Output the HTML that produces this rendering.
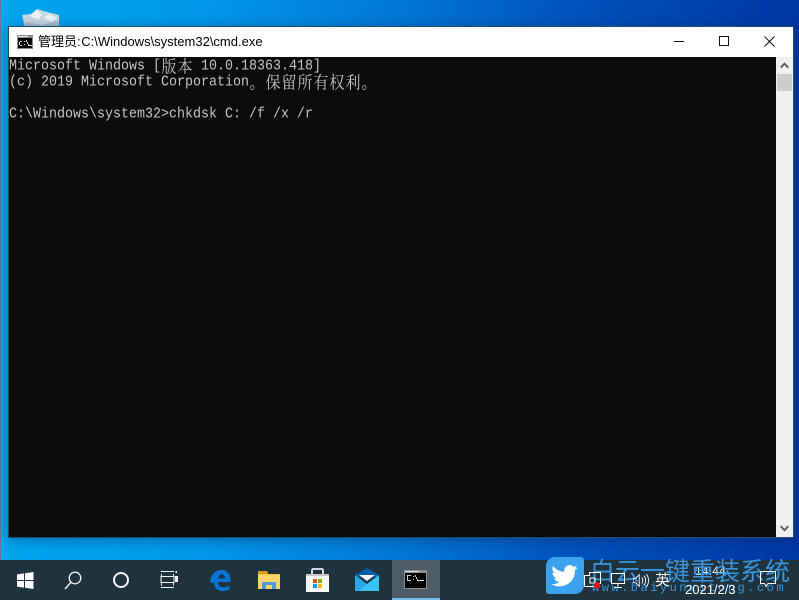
<!DOCTYPE html>
<html><head><meta charset="utf-8">
<style>
html,body{margin:0;padding:0;width:799px;height:600px;overflow:hidden;background:#0070d0}
*{box-sizing:border-box}
.a{position:absolute}
#bg{left:0;top:0;width:799px;height:600px;background:linear-gradient(90deg,#00a6ee 0%,#0098ea 25%,#0078d6 50%,#0052bc 72%,#0036a4 100%)}
#win{left:8px;top:26px;width:786px;height:512px;border:1px solid #1a4f6e;box-shadow:0 2px 12px rgba(0,40,90,.45);background:#fff}
#con{left:9px;top:57px;width:767px;height:480px;background:#0c0c0c}
.l{position:absolute;left:9px;font:13.33px/16px "Liberation Mono","Noto Serif CJK SC",monospace;color:#c4c4c4;white-space:pre;height:16px;transform:scaleY(1.14)}
.c{display:inline-block;width:16px;font:15px/16px "Noto Serif CJK SC",serif;text-align:center;vertical-align:top}
#title{left:38px;top:34px;font:13px/16px "Liberation Sans","Noto Sans CJK SC",sans-serif;color:#000;white-space:pre;word-spacing:-3px}
#tb{left:0;top:560px;width:799px;height:40px;background:#1f333f}
</style></head><body>
<div class="a" id="bg"></div>
<div class="a" style="left:0;top:0;width:1px;height:560px;background:#6a7a88"></div>
<svg class="a" style="left:21px;top:9px" width="40" height="19" viewBox="0 0 40 19"><path d="M1 6 L10 5 L16 0 L26 3 L38 6 L38 19 L4 19Z" fill="#c9d8e2"/><path d="M9 7l7-6 5 5-4 5zM22 8l7-3 7 4-6 4z" fill="#eef3f6"/><path d="M4 13l16 3 18-4v7H5z" fill="#a9bfcf"/></svg>

<div class="a" id="win"></div>
<svg class="a" style="left:17px;top:35px" width="16" height="14" viewBox="0 0 16 14"><rect width="16" height="14" fill="#8c8c8c"/><rect x="1" y="3" width="14" height="10" fill="#000"/><rect x="1" y="1" width="10" height="1" fill="#e8e8e8"/><path d="M3 6h2v1H3v3h2v1H3V10H2V7h1zM7 6h1v1H7zM7 9h1v1H7zM9 5h1v2h1v2h1v2h-1V9h-1V7H9z" fill="#ddd"/><rect x="12" y="10" width="3" height="1" fill="#ddd"/></svg>
<div class="a" id="title">管理员: C:\Windows\system32\cmd.exe</div>
<div class="a" style="left:674px;top:41px;width:10px;height:1px;background:#111"></div>
<div class="a" style="left:719px;top:36px;width:10px;height:10px;border:1px solid #111"></div>
<svg class="a" style="left:764px;top:36px" width="11" height="11" viewBox="0 0 11 11"><path d="M.5.5l10 10M10.500.5l-10 10" stroke="#111" stroke-width="1" fill="none"/></svg>

<div class="a" id="con"></div>
<div class="a" style="left:776px;top:57px;width:17px;height:480px;background:#f0f0f0"></div>
<div class="a" style="left:777px;top:74px;width:15px;height:17px;background:#cdcdcd"></div>
<svg class="a" style="left:780px;top:62px" width="9" height="7" viewBox="0 0 9 7"><path d="M.7 5.700L4.500 1.700l3.800 4" stroke="#606060" stroke-width="2" fill="none"/></svg>
<svg class="a" style="left:780px;top:525px" width="9" height="7" viewBox="0 0 9 7"><path d="M.7 1.200l3.800 4 3.800-4" stroke="#606060" stroke-width="2" fill="none"/></svg>

<div class="l" style="top:59px">Microsoft Windows [<span class="c">版</span><span class="c">本</span> 10.0.18363.418]</div>
<div class="l" style="top:75px">(c) 2019 Microsoft Corporation<span class="c">。</span><span class="c">保</span><span class="c">留</span><span class="c">所</span><span class="c">有</span><span class="c">权</span><span class="c">利</span><span class="c">。</span></div>
<div class="l" style="top:107px">C:\Windows\system32&gt;chkdsk C: /f /x /r</div>

<div class="a" id="tb"></div>
<svg class="a" style="left:17px;top:572px" width="17" height="17" viewBox="0 0 17 17"><path d="M0 2.400L7 1.400V8H0zM8 1.300L16.500 0V8H8zM0 9H7V15.600L0 14.600zM8 9H16.500V17L8 15.800z" fill="#fff"/></svg>
<svg class="a" style="left:64px;top:571px" width="19" height="19" viewBox="0 0 19 19"><circle cx="11" cy="7" r="5.800" fill="none" stroke="#f2f4f5" stroke-width="1.300"/><path d="M7 11.200L1 18" stroke="#f2f4f5" stroke-width="1.400" fill="none"/></svg>
<div class="a" style="left:113px;top:572px;width:16px;height:16px;border:2.500px solid #f4f6f7;border-radius:50%"></div>
<svg class="a" style="left:160px;top:571px" width="18" height="17" viewBox="0 0 18 17"><path d="M1 .5h13M1 16.500h13M1.500 3v2M13.500 3v2M1 5.500h13v6H1zM1.500 12v2.500M13.500 12v2.500" stroke="#f2f4f5" fill="none"/><rect x="15.500" y="0" width="1.500" height="2" fill="#f2f4f5"/><rect x="15" y="5" width="3" height="6" fill="#f2f4f5"/></svg>
<svg class="a" style="left:210px;top:570px" width="21" height="21" viewBox="0 0 21 21"><path fill-rule="evenodd" d="M0 11C1 4 6 0 11.500 0 17.500 0 21 5 20.500 12H8C8 15.500 10.500 17.200 13.500 17.200 16 17.200 18 16.500 19.500 15.200V19.300C17.500 20.500 15 21 13 21 6.500 21 3.500 16.500 4.500 12.500 3 13.500 1 13.500 0 11ZM8.200 8.500H15C15 5.500 13.200 4.200 11.800 4.200 10.200 4.200 8.800 6 8.200 8.500Z" fill="#0a74d6"/></svg>
<svg class="a" style="left:258px;top:571px" width="22" height="18" viewBox="0 0 22 18"><path d="M0 0h9l1 2v2H0z" fill="#d99c12"/><rect y="3" width="22" height="15" fill="#fdd465"/><path d="M0 3h22v1H0z" fill="#f7c24b"/><path d="M4 18v-7h14v7h-4v-4H8v4z" fill="#4f9ad3"/></svg>
<svg class="a" style="left:306px;top:568px" width="23" height="24" viewBox="0 0 23 24"><path d="M6 7V2.500Q6 1 7.500 1h8Q17 1 17 2.500V7" fill="none" stroke="#ececec" stroke-width="1.800"/><rect y="6" width="23" height="18" fill="#f7f7f7"/><rect y="6" width="23" height="2" fill="#c8c8c8"/><rect x="7" y="11" width="4" height="4" fill="#ee4e22"/><rect x="12" y="11" width="4" height="4" fill="#77b900"/><rect x="7" y="16" width="4" height="4" fill="#0f9fe8"/><rect x="12" y="16" width="4" height="4" fill="#fdb900"/></svg>
<svg class="a" style="left:355px;top:568px" width="24" height="23" viewBox="0 0 24 23"><path d="M0 7L12 0l12 7v2H0z" fill="#0a5cab"/><path d="M4 7h16l-8 6z" fill="#f3f6fa"/><path d="M0 7l12 9L24 7v16H0z" fill="#2aa8ea"/><path d="M12 16L24 7v16H4z" fill="#38c3f5"/></svg>
<div class="a" style="left:392px;top:560px;width:48px;height:40px;background:#4d5c66"></div>
<div class="a" style="left:392px;top:598px;width:48px;height:2px;background:#76b9ed"></div>
<svg class="a" style="left:404px;top:570px" width="23" height="20" viewBox="0 0 23 20"><rect width="23" height="19" fill="#8e8e8e"/><rect x="1" y="3" width="21" height="15" fill="#000"/><rect x="1" y="1" width="14" height="1" fill="#ddd"/><path d="M3 5h4v1H4v4h3v1H3zM9 6h1v1H9zM9 9h1v1H9zM11 5h1v2h1v2h1v2h-1V9h-1V7h-1z" fill="#ccc"/><rect x="14" y="10" width="6" height="1" fill="#ddd"/></svg>

<div class="a" style="left:695px;top:563px;font:12px/16px 'Liberation Sans',sans-serif;color:#fff;letter-spacing:.2px">14:44</div>

<div class="a" style="left:546px;top:557px;width:38px;height:37px;background:#3ba3ee;border-radius:9px 3px 9px 3px"></div>
<svg class="a" style="left:551px;top:565px" width="27" height="22" viewBox="0 0 24 20"><path d="M24 2.400c-.9.400-1.800.700-2.800.800 1-.6 1.800-1.500 2.200-2.700-1 .6-2 1-3.100 1.200A4.900 4.900 0 0 0 11.900 6.200C7.800 6 4.200 4 1.700.9c-1.300 2.200-.7 5.100 1.500 6.600-.8 0-1.600-.2-2.200-.6 0 2.400 1.700 4.400 3.900 4.900-.7.200-1.500.2-2.200.1.600 2 2.400 3.400 4.600 3.400A9.900 9.900 0 0 1 0 17.300a14 14 0 0 0 21.500-12.400c1-.7 1.800-1.500 2.500-2.500z" fill="#fff"/></svg>
<div class="a" style="left:590px;top:556px;width:205px;font:25px/28px 'Noto Sans CJK SC',sans-serif;color:#3a94dc;white-space:pre">白云一键重装系统</div>
<div class="a" style="left:592px;top:581px;font:12px/14px 'Liberation Mono',monospace;color:#3a94dc;white-space:pre;letter-spacing:2.5px">www.baiyunxitong.com</div>

<svg class="a" style="left:584px;top:572px" width="18" height="17" viewBox="0 0 18 17"><path d="M.5 3.500h5V.5h11v11h-5v3H.5z" fill="none" stroke="#fff"/><path d="M6 6h5v5H6z" fill="none" stroke="#fff"/><circle cx="13" cy="13.500" r="3.300" fill="#e81123"/></svg>
<svg class="a" style="left:611px;top:573px" width="15" height="17" viewBox="0 0 15 17"><path d="M.5.500h13v10H.5zM7 10.500v3M3 14.500h8" fill="none" stroke="#fff"/></svg>
<svg class="a" style="left:633px;top:573px" width="16" height="15" viewBox="0 0 18 15"><path d="M0 5h3l4-4v13l-4-4H0z" fill="none" stroke="#fff"/><path d="M10 4q2 3.500 0 7M12.500 2q3.500 5.500 0 11M15 0q5 7.500 0 15" fill="none" stroke="#fff"/></svg>
<div class="a" style="left:655px;top:571px;font:15px/18px 'Noto Sans CJK SC',sans-serif;color:#fff">英</div>
<div class="a" style="left:685px;top:582px;font:13px/16px 'Liberation Sans',sans-serif;color:#fff">2021/2/3</div>
<svg class="a" style="left:760px;top:571px" width="17" height="18" viewBox="0 0 17 18"><path d="M.5.500h15v12H8l-2 3-1.500-3H.5z" fill="none" stroke="#fff"/></svg>
</body></html>
